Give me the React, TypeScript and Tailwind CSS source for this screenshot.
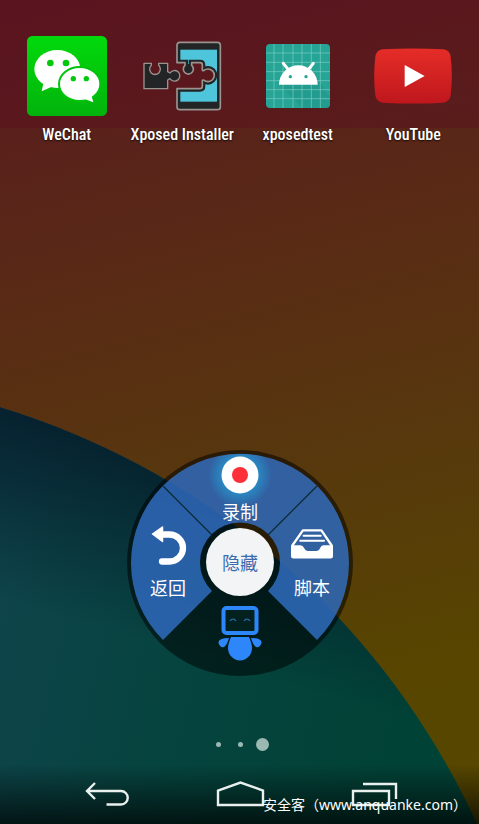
import type { ReactNode } from 'react';

const WeChatIcon = () => (
  <svg width="80" height="80" viewBox="0 0 240 240">
    <defs>
      <linearGradient id="wechat" x1="0" y1="0" x2="0" y2="1">
        <stop offset="0" stopColor="#02da0c" />
        <stop offset="1" stopColor="#02b30c" />
      </linearGradient>
    </defs>
    <rect width="240" height="240" rx="16" fill="url(#wechat)" />
    <ellipse cx="91" cy="99" rx="69" ry="57" fill="#fff" />
    <path d="M50 138L44 166L78 151Z" fill="#fff" />
    <ellipse cx="158" cy="144" rx="62" ry="51" fill="#fff" stroke="#02c40c" strokeWidth="6" />
    <path d="M170 188L199 199L192 174Z" fill="#fff" />
    <g fill="#02c80c">
      <circle cx="70" cy="81" r="10" />
      <circle cx="117" cy="81" r="10" />
      <circle cx="139" cy="128" r="8" />
      <circle cx="178" cy="128" r="8" />
    </g>
  </svg>
);

const PHONE =
  'M531 130V78Q531 69 540 69H652Q661 69 661 78V262Q661 271 652 271H540Q531 271 531 262V208H600Q607 208 607 201V183L611 182A19 19 0 1 0 611 154L607 153V137Q607 130 600 130H575V138A15 15 0 1 1 555 138V130Z';

const XposedIcon = () => (
  <svg width="80" height="72" viewBox="426 62 240 216">
    <defs>
      <clipPath id="phone">
        <path d={PHONE} />
      </clipPath>
    </defs>
    <g clipPath="url(#phone)">
      <rect x="530" y="66" width="134" height="208" fill="#222426" />
      <rect x="541" y="91" width="110" height="156" fill="#4fc5dc" />
      <path
        d="M531 208H600Q607 208 607 201V183L611 182A19 19 0 1 0 611 154L607 153V137Q607 130 600 130H575V138A15 15 0 1 1 555 138V130H531"
        fill="none"
        stroke="#222426"
        strokeWidth="18"
      />
      <circle cx="565" cy="149" r="15" fill="#222426" />
    </g>
    <path d={PHONE} fill="none" stroke="#99948f" strokeWidth="5" strokeLinejoin="round" />
    <path
      d="M432 132H454V138A16 16 0 1 0 476 138V132H503V157L510 161A16 16 0 1 1 510 178L503 182V208H432Z"
      fill="#222426"
      stroke="#99948f"
      strokeWidth="4"
      strokeLinejoin="round"
    />
  </svg>
);

const AndroidIcon = () => (
  <svg width="64" height="64" viewBox="0 0 192 192">
    <rect width="192" height="192" rx="12" fill="#26a596" />
    <path d="M39 122L109 192H180Q192 192 192 180V160L151 100Z" fill="#1d9385" opacity="0.5" />
    <path
      d="M24 0V192M51 0V192M81 0V192M108 0V192M136 0V192M163 0V192M0 27H192M0 55H192M0 83H192M0 110H192M0 137H192M0 164H192"
      stroke="#7fcdc4"
      strokeWidth="2"
    />
    <path d="M39 122A58 58 0 0 1 155 122Z" fill="#fff" />
    <path d="M52 58L68 78M142 58L126 78" stroke="#fff" strokeWidth="9" strokeLinecap="round" />
    <circle cx="73" cy="98" r="5" fill="#26a596" />
    <circle cx="120" cy="98" r="5" fill="#26a596" />
  </svg>
);

const YouTubeIcon = () => (
  <svg width="78" height="56" viewBox="0 0 234 168">
    <defs>
      <linearGradient id="youtube" x1="0" y1="0" x2="0" y2="1">
        <stop offset="0" stopColor="#e52d27" />
        <stop offset="1" stopColor="#bf171d" />
      </linearGradient>
    </defs>
    <path d="M26 4Q117 -1 208 4Q227 6 230 26Q237 84 230 142Q227 162 208 164Q117 169 26 164Q7 162 4 142Q-3 84 4 26Q7 6 26 4Z" fill="url(#youtube)" />
    <path d="M92 52L153 84L134 94Z" fill="#8d1a1b" opacity="0.6" />
    <path d="M92 51V117L152 84Z" fill="#fff" />
  </svg>
);

const apps: { name: string; icon: ReactNode }[] = [
  { name: 'WeChat', icon: <WeChatIcon /> },
  { name: 'Xposed Installer', icon: <XposedIcon /> },
  { name: 'xposedtest', icon: <AndroidIcon /> },
  { name: 'YouTube', icon: <YouTubeIcon /> },
];

const Wallpaper = () => (
  <svg className="absolute inset-0 h-full w-full" viewBox="0 0 479 824" preserveAspectRatio="none">
    <defs>
      <linearGradient id="warm" gradientUnits="userSpaceOnUse" x1="100" y1="0" x2="300" y2="824">
        <stop offset="0" stopColor="#5a1a1e" />
        <stop offset="0.18" stopColor="#59231a" />
        <stop offset="0.36" stopColor="#592c14" />
        <stop offset="0.6" stopColor="#57390d" />
        <stop offset="0.85" stopColor="#574500" />
        <stop offset="1" stopColor="#574700" />
      </linearGradient>
      <linearGradient id="teal" gradientUnits="userSpaceOnUse" x1="0" y1="620" x2="400" y2="720">
        <stop offset="0" stopColor="#0e444a" />
        <stop offset="0.5" stopColor="#05443e" />
        <stop offset="1" stopColor="#014236" />
      </linearGradient>
      <linearGradient id="tealShade" gradientUnits="userSpaceOnUse" x1="80" y1="405" x2="20" y2="605">
        <stop offset="0" stopColor="#041828" stopOpacity="0.9" />
        <stop offset="1" stopColor="#041828" stopOpacity="0" />
      </linearGradient>
      <linearGradient id="navShade" x1="0" y1="0" x2="0" y2="1">
        <stop offset="0" stopColor="#000" stopOpacity="0" />
        <stop offset="1" stopColor="#000" stopOpacity="0.7" />
      </linearGradient>
    </defs>
    <rect width="479" height="824" fill="url(#warm)" />
    <rect width="479" height="128" fill="#5c0b22" opacity="0.35" />
    <circle cx="-224" cy="1145" r="771" fill="url(#teal)" />
    <circle cx="-224" cy="1145" r="771" fill="url(#tealShade)" />
    <rect y="764" width="479" height="60" fill="url(#navShade)" />
  </svg>
);

const WheelDisc = () => (
  <svg className="absolute inset-0 h-full w-full" viewBox="-113 -113 226 226">
    <defs>
      <radialGradient id="glow">
        <stop offset="0.5" stopColor="#23a6dc" stopOpacity="0.65" />
        <stop offset="1" stopColor="#23a6dc" stopOpacity="0" />
      </radialGradient>
      <clipPath id="disc">
        <circle r="109" />
      </clipPath>
    </defs>
    <circle r="113" fill="#000" opacity="0.52" />
    <path
      d="M-77 77A109 109 0 1 1 77 77L28 28A40 40 0 1 0 -28 28Z"
      fill="#3678d6"
      opacity="0.75"
    />
    <path d="M-77 -77L-28 -28M77 -77L28 -28" stroke="#0b2a35" strokeWidth="1.3" />
    <circle cy="-88" r="32" fill="url(#glow)" clipPath="url(#disc)" />
  </svg>
);

const RecordIcon = () => (
  <svg width="38" height="38" viewBox="0 0 38 38">
    <circle cx="19" cy="19" r="18.5" fill="#fff" />
    <circle cx="19" cy="19" r="8" fill="#fd2f38" />
  </svg>
);

const UndoIcon = () => (
  <svg width="38" height="42" viewBox="0 0 38 42">
    <path d="M3.5 9L13.5 2V16.5Z" fill="#fff" stroke="#fff" strokeWidth="1.5" strokeLinejoin="round" />
    <path d="M12 9.5H20.5a13.5 13.5 0 0 1 0 27H13" fill="none" stroke="#fff" strokeWidth="6.3" strokeLinecap="round" />
  </svg>
);

const TrayIcon = () => (
  <svg width="42" height="42" viewBox="0 -13 127 126">
    <path d="M3 50L36 3H92L124 50" fill="none" stroke="#fff" strokeWidth="7" strokeLinejoin="round" />
    <path d="M38 19H90M28 34H100" stroke="#fff" strokeWidth="6" strokeLinecap="round" />
    <path d="M0 48H28Q36 48 40 57Q43 65 51 65H77Q85 65 88 57Q91 48 99 48H127V81Q127 88 120 88H7Q0 88 0 81Z" fill="#fff" />
  </svg>
);

const RobotIcon = () => (
  <svg width="44" height="58" viewBox="0 0 44 58">
    <rect x="5.5" y="4" width="33" height="25" rx="3" fill="#02211f" stroke="#2d87fb" strokeWidth="4" />
    <path d="M12 17q3-4 6 0M26 17q3-4 6 0" fill="none" stroke="#2d6fc0" strokeWidth="1.2" />
    <path d="M13 33H31Q34 40 34 44A12 12.5 0 0 1 10 44Q10 40 13 33Z" fill="#2d87fb" />
    <path d="M11 34Q0 34 0.5 39Q2 44 6 43Q9 41 11 34ZM33 34Q44 34 43.5 39Q42 44 38 43Q35 41 33 34Z" fill="#2d87fb" />
  </svg>
);

function WheelButton({ label, icon, gap }: { label: string; icon: ReactNode; gap: string }) {
  return (
    <button className={`flex flex-col items-center ${gap}`}>
      {icon}
      <span className="text-lg leading-6 whitespace-nowrap">{label}</span>
    </button>
  );
}

function ControlWheel() {
  return (
    <div className="relative mx-auto h-[226px] w-[226px]">
      <WheelDisc />
      <div className="relative flex flex-col items-center pt-[6px] font-['Noto_Sans_CJK_SC',sans-serif] text-white">
        <WheelButton label="录制" icon={<RecordIcon />} gap="gap-[5px]" />
        <div className="flex h-[78px] w-full items-center justify-between px-[15px]">
          <div className="flex w-[52px] justify-center">
            <WheelButton label="返回" icon={<UndoIcon />} gap="gap-2" />
          </div>
          <button className="h-[68px] w-[68px] rounded-full bg-[#f3f4f5] text-lg text-[#3c6cb0]">隐藏</button>
          <div className="flex w-[52px] justify-center">
            <WheelButton label="脚本" icon={<TrayIcon />} gap="gap-2" />
          </div>
        </div>
        <button aria-label="Robot" className="pt-[3px]">
          <RobotIcon />
        </button>
      </div>
    </div>
  );
}

const navItems: { label: string; path: string }[] = [
  { label: 'Back', path: 'M14 3L6 11L14 19M6 11H40A6.5 6.5 0 0 1 40 24.5H25.5' },
  { label: 'Home', path: 'M2 25V10.5L24.5 2.5L47 10.5V25Z' },
  { label: 'Recent apps', path: 'M2 11H38V25H2ZM12 4H45V19' },
];

export default function App() {
  return (
    <div className="relative flex min-h-screen flex-col overflow-hidden bg-[#57390d] font-['Roboto_Condensed',Roboto,sans-serif]">
      <Wallpaper />

      <main className="relative flex flex-1 flex-col pl-px">
        <div className="grid grid-cols-4 px-2 pt-9">
          {apps.map((app) => (
            <a key={app.name} href="#" className="flex flex-col items-center gap-[7px]">
              <span className="flex h-20 items-center">{app.icon}</span>
              <span className="text-base leading-6 font-medium whitespace-nowrap text-white [text-shadow:0_1px_2px_rgba(0,0,0,0.8)]">
                {app.name}
              </span>
            </a>
          ))}
        </div>

        <div className="mt-auto mb-[60px]">
          <ControlWheel />
        </div>

        {/* page dots */}
        <div className="mb-6 flex h-4 items-center justify-center">
          <span className="flex w-[22px] justify-center"><i className="h-[5px] w-[5px] rounded-full bg-[#9bb8b3]" /></span>
          <span className="flex w-[22px] justify-center"><i className="h-[5px] w-[5px] rounded-full bg-[#9bb8b3]" /></span>
          <span className="flex w-[22px] justify-center"><i className="h-[13px] w-[13px] shrink-0 rounded-full bg-[#9bb8b3]" /></span>
        </div>
      </main>

      <nav className="relative grid h-12 grid-cols-3 pt-1 pr-9 pl-[38px]">
        {navItems.map((item) => (
          <button key={item.label} aria-label={item.label} className="flex justify-center">
            <svg width="49" height="28" viewBox="0 0 49 28" fill="none" stroke="#e9f0ee" strokeWidth="2.4">
              <path d={item.path} />
            </svg>
          </button>
        ))}
      </nav>

      <p className="absolute right-0 bottom-[9px] pr-3 font-['Noto_Sans','Noto_Sans_CJK_SC',sans-serif] text-sm leading-5 whitespace-nowrap text-white">
        安全客（www.anquanke.com）
      </p>
    </div>
  );
}
